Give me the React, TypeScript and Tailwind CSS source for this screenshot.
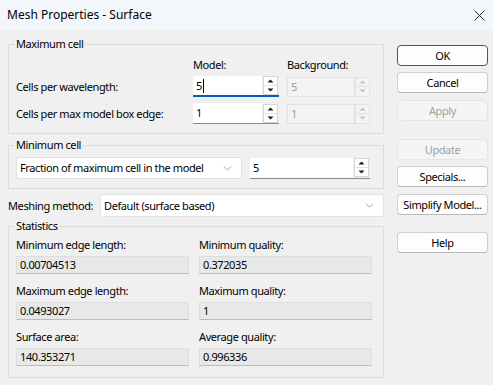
import { ChevronDown } from "lucide-react";

function Arrow({ dir, muted }: { dir: "up" | "down"; muted?: boolean }) {
  return (
    <svg width="7" height="4" viewBox="0 0 7 4" className="block">
      <path
        d={dir === "up" ? "M0.5 3.5 L3.5 0.5 L6.5 3.5 Z" : "M0.5 0.5 L3.5 3.5 L6.5 0.5 Z"}
        fill={muted ? "#c4c4c4" : "#1a1a1a"}
      />
    </svg>
  );
}

function Spinner({ muted }: { muted?: boolean }) {
  return (
    <div
      className={
        "flex h-full w-[15px] shrink-0 flex-col border " +
        (muted ? "border-[#e4e4e4] bg-[#f3f3f3]" : "border-[#d6d6d6] bg-white")
      }
    >
      <div className="flex flex-1 items-center justify-center border-b border-[#e2e2e2]">
        <Arrow dir="up" muted={muted} />
      </div>
      <div className="flex flex-1 items-center justify-center">
        <Arrow dir="down" muted={muted} />
      </div>
    </div>
  );
}

function SpinEdit({
  value,
  focused,
  disabled,
  className = "",
}: {
  value: string;
  focused?: boolean;
  disabled?: boolean;
  className?: string;
}) {
  if (disabled) {
    return (
      <div className={"flex h-[20px] items-stretch " + className}>
        <div className="flex flex-1 items-center border border-[#e2e2e2] bg-[#f3f3f3] pl-[3px] text-[#a0a0a0]">
          {value}
        </div>
        <Spinner muted />
      </div>
    );
  }
  return (
    <div
      className={
        "flex h-[21px] items-stretch " +
        (focused ? "border-b-2 border-[#005fb8]" : "border-b border-[#8a8a8a]") +
        " " +
        className
      }
    >
      <div className="flex flex-1 items-center bg-white pl-[3px]">
        {value}
        {focused && <span className="ml-[1px] h-[14px] border-l border-black" />}
      </div>
      <div className="flex items-center pl-[1px] pr-[1px]">
        <div className="h-[19px]">
          <Spinner />
        </div>
      </div>
    </div>
  );
}

function Combo({ value, className = "" }: { value: string; className?: string }) {
  return (
    <div
      className={
        "flex items-center justify-between rounded-[3px] border border-[#e1e1e1] bg-white pl-[3px] pr-[7px] " +
        className
      }
    >
      <span className="whitespace-nowrap">{value}</span>
      <ChevronDown size={13} strokeWidth={1} color="#555" />
    </div>
  );
}

function Btn({
  label,
  primary,
  disabled,
  className = "",
}: {
  label: string;
  primary?: boolean;
  disabled?: boolean;
  className?: string;
}) {
  const tone = primary
    ? "border-[#0067c0] bg-[#fdfdfd] text-black"
    : disabled
    ? "border-[#e5e5e5] bg-[#f5f5f5] text-[#a0a0a0]"
    : "border-[#d0d0d0] border-b-[#b8b8b8] bg-[#fdfdfd] text-black";
  return (
    <div
      className={
        "flex h-[21px] items-center justify-center whitespace-nowrap rounded-[4px] border " +
        tone +
        " " +
        className
      }
    >
      {label}
    </div>
  );
}

function Stat({ label, value }: { label: string; value: string }) {
  return (
    <div className="flex flex-col">
      <div className="h-[16px]">{label}</div>
      <div className="mt-[3px] flex h-[18px] items-center border border-[#dedede] border-b-[#bcbcbc] bg-[#e8e8e8] pl-[3px]">
        {value}
      </div>
    </div>
  );
}

function Group({
  title,
  className = "",
  children,
}: {
  title: string;
  className?: string;
  children: React.ReactNode;
}) {
  return (
    <fieldset className={"border border-[#dcdcdc] " + className}>
      <legend className="ml-[5px] px-[2px]">{title}</legend>
      <div className="px-[7px]">{children}</div>
    </fieldset>
  );
}

export default function App() {
  return (
    <div className="h-[385px] w-[493px] overflow-hidden bg-[#f0f0f0] font-['Noto_Sans','Liberation_Sans',sans-serif] text-[11px] leading-[16px] tracking-[-0.4px] text-black">
      <div className="flex h-[30px] items-center justify-between bg-[#f3f6fa] pl-[7px] pr-[8px] text-[12px] tracking-normal">
        <span>Mesh Properties - Surface</span>
        <svg width="11" height="11" viewBox="0 0 11 11">
          <path d="M0.5 0.5 L10.5 10.5 M10.5 0.5 L0.5 10.5" stroke="#222" strokeWidth="1" />
        </svg>
      </div>

      <div className="flex pl-[8px] pt-[6px]">
        <div className="flex w-[376px] flex-col">
          <Group title="Maximum cell" className="pb-[9px]">
            <div className="mt-[5px] grid grid-cols-[169px_86px_83px] gap-x-[8px]">
              <div />
              <div className="h-[16px]">Model:</div>
              <div className="h-[16px]">Background:</div>
            </div>
            <div className="mt-[3px] grid grid-cols-[169px_86px_83px] items-center gap-x-[8px]">
              <div>Cells per wavelength:</div>
              <SpinEdit value="5" focused />
              <SpinEdit value="5" disabled />
            </div>
            <div className="mt-[6px] grid grid-cols-[169px_86px_83px] items-center gap-x-[8px]">
              <div>Cells per max model box edge:</div>
              <SpinEdit value="1" />
              <SpinEdit value="1" disabled />
            </div>
          </Group>

          <Group title="Minimum cell" className="mt-[3px] pb-[9px]">
            <div className="mt-[4px] flex items-center gap-[8px]">
              <Combo value="Fraction of maximum cell in the model" className="h-[22px] w-[226px]" />
              <SpinEdit value="5" className="w-[120px]" />
            </div>
          </Group>

          <div className="mt-[5px] flex items-center">
            <span className="w-[92px] whitespace-nowrap">Meshing method:</span>
            <Combo value="Default (surface based)" className="h-[23px] flex-1" />
          </div>

          <Group title="Statistics" className="mt-[1px] pb-[11px]">
            <div className="mt-[3px] grid grid-cols-[173px_173px] gap-x-[10px] gap-y-[9px]">
              <Stat label="Minimum edge length:" value="0.00704513" />
              <Stat label="Minimum quality:" value="0.372035" />
              <Stat label="Maximum edge length:" value="0.0493027" />
              <Stat label="Maximum quality:" value="1" />
              <Stat label="Surface area:" value="140.353271" />
              <Stat label="Average quality:" value="0.996336" />
            </div>
          </Group>
        </div>

        <div className="ml-[13px] flex w-[91px] flex-col pt-[9px]">
          <Btn label="OK" primary />
          <Btn label="Cancel" className="mt-[6px]" />
          <Btn label="Apply" disabled className="mt-[7px]" />
          <Btn label="Update" disabled className="mt-[18px]" />
          <Btn label="Specials..." className="mt-[6px]" />
          <Btn label="Simplify Model..." className="mt-[7px]" />
          <Btn label="Help" className="mt-[17px]" />
        </div>
      </div>
    </div>
  );
}
